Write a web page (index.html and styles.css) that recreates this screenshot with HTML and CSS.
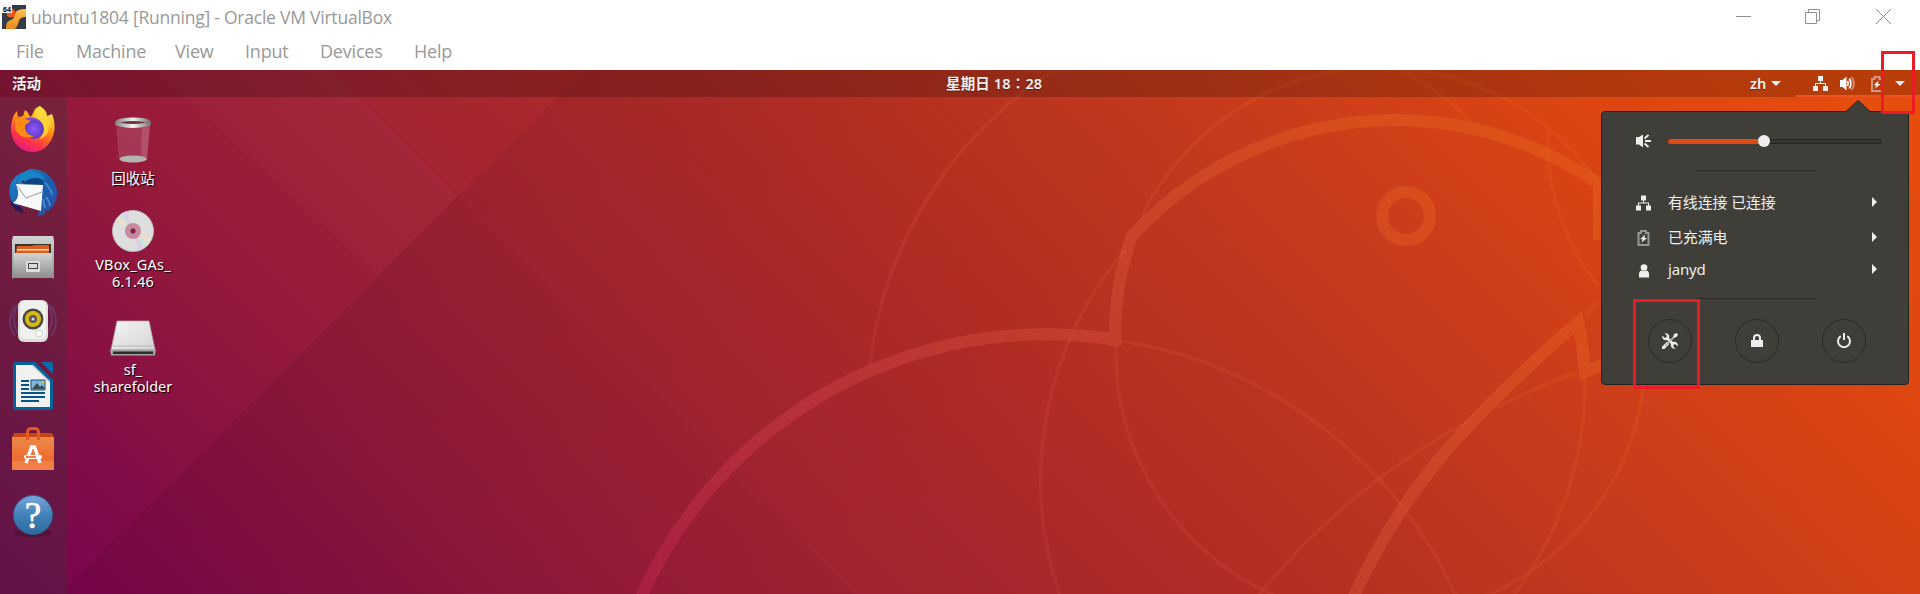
FILE: index.html
```html
<!DOCTYPE html>
<html lang="zh">
<head>
<meta charset="utf-8">
<title>ubuntu1804</title>
<link rel="stylesheet" href="styles.css">
</head>
<body>
<svg width="0" height="0" class="defs">
  <symbol id="net" viewBox="0 0 15 15"><path d="M5 0h5v5H8v2h5v3h2v5h-5v-5h2V8H3v2h2v5H0v-5h2V7h5V5H5z" fill="currentColor"/></symbol>
  <symbol id="bat" viewBox="0 0 12 16"><path d="M3.500 1h5v2H11v12H1V3h2.500z" fill="none" stroke="currentColor" stroke-width="2" opacity=".5"/><path d="M7.500 4.500 2.600 9.200h2.600L4 12.700 9.600 8H7z" fill="currentColor"/></symbol>
  <symbol id="wrench" viewBox="0 0 16 16">
    <path d="M14.500 0 16 1.500 14.700 4 12.500 4.600 3.800 13.500 2.500 12.200 11.400 3.500 12 1.300z" fill="currentColor"/>
    <path d="M0 13.700 5 8.800 7.200 11 2.300 16A1.600 1.600 0 0 1 0 13.700z" fill="currentColor"/>
    <path d="M2.500.3 4.800 2.600 4.500 4.500 2.600 4.800.3 2.500C-.3 6 2 7.800 5 7L9 11c-.8 3 1.500 5.300 4.500 4.700l-2.200-2.300.3-1.800 1.900-.4 2.300 2.300C16.300 10 14 8.300 11 9L7 5C7.800 2 6-.3 2.500.3z" fill="currentColor"/>
    <path d="M11 5 3 13" stroke="#3f3e38" stroke-width=".6"/>
  </symbol>
</svg>

<header class="window">
  <div class="title">
    <svg class="app" viewBox="0 0 24 24"><defs><linearGradient id="vb" x2="0" y2="1"><stop stop-color="#ffc04d"/><stop offset="1" stop-color="#e8881c"/></linearGradient></defs><path fill="#343b47" d="M0 0h24v24H0z"/><path d="M24 4v8c-4 0-6 1-7 4-1 3-2 6-4 8H4c0-5 1-8 5-9 3-1 3-3 4-6 1-4 5-5 11-5z" fill="url(#vb)"/><circle cx="9" cy="8" r="4.500" fill="#ee5a1c"/><path d="M0 0h10v8H0z" fill="#eee"/><text x="1" y="6.500" font-size="7" font-weight="700" font-family="Liberation Sans">64</text></svg>
    <span class="caption">ubuntu1804 [Running] - Oracle VM VirtualBox</span>
    <svg class="controls" viewBox="0 0 160 20" fill="none" stroke="#8f8f8f"><path d="M0 9.500h15M69.500 5.500h11v11h-11zM72.500 5V2.500h11v11H81M140 2l15 15M155 2l-15 15"/></svg>
  </div>
  <nav class="menubar"><span class="m1">File</span><span class="m2">Machine</span><span class="m3">View</span><span class="m4">Input</span><span class="m5">Devices</span><span>Help</span></nav>
</header>

<main class="screen">
  <svg class="wallpaper" viewBox="0 70 1920 524" fill="none">
    <defs>
      <linearGradient id="bg" gradientUnits="userSpaceOnUse" x1="67" y1="667" x2="1292" y2="-558">
        <stop offset="0" stop-color="#750250"/><stop offset=".23" stop-color="#951a3b"/><stop offset=".34" stop-color="#a02234"/><stop offset=".47" stop-color="#ad2a27"/><stop offset=".73" stop-color="#cd3e1a"/><stop offset=".86" stop-color="#df4711"/><stop offset="1" stop-color="#ea4f0c"/>
      </linearGradient>
      <linearGradient id="fade" gradientUnits="userSpaceOnUse" x1="300" y1="354" x2="700" y2="754"><stop stop-color="#000" stop-opacity=".045"/><stop offset="1" stop-color="#000" stop-opacity=".01"/></linearGradient>
      <linearGradient id="line" gradientUnits="userSpaceOnUse" x1="640" y1="594" x2="1250" y2="-16"><stop stop-color="#c0234f" stop-opacity=".5"/><stop offset=".45" stop-color="#dd5249" stop-opacity=".35"/><stop offset="1" stop-color="#ec6a20" stop-opacity=".35"/></linearGradient>
    </defs>
    <path d="M0 70h1920v524H0z" fill="url(#bg)"/>
    <path d="M60 594 584 70H1920V594z" fill="url(#fade)"/>
    <path d="M331 70h253L457 197z" fill="#ff6030" opacity=".02"/>
    <path d="M155 70h176L457 197 378 275z" fill="#fff" opacity=".018"/>
    <path d="M457 197 854 594H60z" fill="#200" opacity=".025"/>
    <g stroke="url(#line)" stroke-width="12">
      <path d="M641.500 596A444 444 0 0 1 1121 340.500M1115.500 346V322Q1117 278 1132 236A357 357 0 0 1 1599 184V240"/>
      <path d="M1353 598C1400 495 1455 430 1578 322Q1583 345 1585 372L1610 361"/>
      <circle cx="1406" cy="216" r="24"/>
    </g>
    <g stroke="url(#line)" stroke-width="3.500" opacity=".55">
      <path d="M870 364A402 402 0 0 1 1055 70M1121 341A444 444 0 0 1 1457 598M1125 250A357 357 0 0 0 1060 596"/>
      <path d="M1116 345A265 265 0 1 0 1645 331 265 265 0 0 0 1142 216"/>
      <path d="M1400 70Q1440 90 1471 121M1548 130V160Q1558 240 1599 286M1599 302 1586 314M1578 373Q1540 385 1497 407M1468 422Q1350 484 1258 596M1585 377Q1587 494 1514 596"/>
    </g>
  </svg>

  <div class="topbar">
    <span class="activities">活动</span>
    <span class="clock">星期日 18∶28</span>
    <div class="tray">
      <span class="zh">zh</span><i class="down"></i>
      <div class="status">
        <svg class="net"><use href="#net"/></svg>
        <svg class="vol" viewBox="0 0 16 15" fill="none" stroke="#fff" stroke-width="1.800"><path d="M0 4h2.500L6.500 .5v14L2.500 11H0z" fill="#fff" stroke="none"/><path d="M7.500 5q1.500 2.500 0 5M9.300 2.500q3.200 5 0 10"/><path d="M11.500 1q5 6.500 0 13" opacity=".4"/></svg>
        <svg class="bat"><use href="#bat"/></svg>
        <i class="down"></i>
      </div>
    </div>
  </div>

  <div class="work">
    <aside class="dock">
      <svg viewBox="0 0 48 48"><defs><linearGradient id="ff" x1=".8" y1="0" x2=".3" y2="1"><stop stop-color="#fff44f"/><stop offset=".4" stop-color="#ff980e"/><stop offset=".75" stop-color="#ff3647"/><stop offset="1" stop-color="#e31587"/></linearGradient><radialGradient id="fp"><stop stop-color="#9059ff"/><stop offset="1" stop-color="#5b3bbd"/></radialGradient></defs><path d="M31 1c6 4 7 7 7 10l5-2c8 19-4 38-19 38S-3 32 4 12c1-3 3-5 4-6l1 6 5-1 2-6c3 2 4 4 5 7 2-1 3-4 4-6 1-3 4-4 6-5z" fill="url(#ff)"/><path d="M31 1c-6 8-7 12-3 17 4 5 7 9 3 16 8-3 10-9 8-14l3 3C42 13 34 9 31 1z" fill="#ffdc3e" opacity=".8"/><circle cx="25" cy="24" r="10" fill="url(#fp)"/><path d="M6 14c7-4 10 1 16 1-2 4-6 3-6 7 0 5 4 9 9 9-8 4-17 0-19-8z" fill="#ff8a16"/><path d="M16 14c7-3 13-1 16 3-4-2-7-2-10-1z" fill="#7a48d8"/></svg>
      <svg viewBox="0 0 48 48"><defs><linearGradient id="tb" x2="1" y2="1"><stop stop-color="#1c8bd0"/><stop offset=".5" stop-color="#1a5fae"/><stop offset="1" stop-color="#2d4fa5"/></linearGradient></defs><path d="M15 3 20 0c14-1 28 9 28 24 0 9-4 14-9 18l-2-1-1 4-8 2 3-5L8 34l3 8C2 35-1 26 1 17 3 10 8 5 15 3z" fill="url(#tb)"/><path d="M1 32c4 2 5 5 10 5l4 7C8 43 3 39 1 32z" fill="#271754"/><path d="M15 3c-6 6-6 11-5 17 9-12 18-14 27-8C31 2 23 2 15 3z" fill="#1786c9"/><path d="M16 12q12-7 21 2l-4 2-20 2z" fill="#104485"/><path d="M7 15 34 16 32 42 4 34q6-4 5-12z" fill="#f8f9fa"/><path d="M8 17 17 29 33 23" stroke="#999" fill="none"/><path d="M35 13c5 4 7 7 8 13M37 28c2 3 4 5 4 9M34 30l2 9" stroke="#57a9e5" stroke-width="2" stroke-opacity=".6" fill="none"/><circle cx="14" cy="13" r="1.400" fill="#503522"/></svg>
      <svg viewBox="0 0 48 48"><defs><linearGradient id="fi" x2="0" y2="1"><stop stop-color="#d4d4d4"/><stop offset="1" stop-color="#8d8d8d"/></linearGradient></defs><path d="M4 2h40l1 4v39l-2-1H5l-2 1V6z" fill="url(#fi)"/><path d="M6 10h36v10H6z" fill="#37332d"/><path d="M8 12h15l2-1h15v8H7z" fill="#e05c1d"/><path d="M8 15h32v1.500H8z" fill="#ffe4b0"/><path d="M5 19h38l1 25H5z" fill="url(#fi)"/><rect x="17" y="27" width="14" height="11" rx="1" fill="#ddd"/><rect x="19.500" y="29.500" width="9" height="5" fill="#ddd" stroke="#444"/></svg>
      <svg viewBox="0 0 48 48"><path d="M6 8Q-4 24 6 38M9 6Q1 22 9 35M42 8Q52 24 42 38M39 6Q47 22 39 35" stroke="#6570a5" stroke-opacity=".35" stroke-width="1.800" fill="none"/><rect x="9" y="2" width="30" height="42" rx="6" fill="#dededa"/><rect x="11" y="3" width="26" height="38" rx="5" fill="#f0f0ee"/><circle cx="24" cy="21" r="10.500" fill="#4a4a43"/><circle cx="24" cy="21" r="8" fill="#d7b817"/><circle cx="24" cy="21" r="4" fill="#59595b"/><circle cx="24" cy="21" r="1.500" fill="#ddd"/><circle cx="30" cy="35.500" r="3.500" fill="#fff" stroke="#ccc"/></svg>
      <svg viewBox="0 0 48 48"><path d="M6 0h20l18 18v27a3 3 0 0 1-3 3H7a3 3 0 0 1-3-3V3a3 3 0 0 1 2-3z" fill="#05639c"/><path d="M32 0h10q2 0 2 2v10z" fill="#0b6aa8"/><path d="M7 3h17l17 17v25H7z" fill="#f1f1f1"/><path d="m24 3 17 16-2 0L22 3z" fill="#ccc"/><path d="M12 19h8M12 23h8M12 27h8M12 31h24M12 35h24M12 39h18" stroke="#05548a" stroke-width="2"/><path d="M22 18h14v10H22z" fill="#7db8df" stroke="#174f77"/><path d="m23 27 5-6 3 4 2-2 3 4z" fill="#384c4c"/><circle cx="34" cy="20" r="1.600" fill="#e5bd35"/></svg>
      <svg viewBox="0 0 48 48"><defs><linearGradient id="sw" x2="0" y2="1"><stop stop-color="#eb8a4c"/><stop offset=".7" stop-color="#f06a2e"/><stop offset=".75" stop-color="#f27f48"/></linearGradient></defs><path d="M5 7h38l2 5H3z" fill="#c9440f"/><path d="M3 11h42v33H3z" fill="url(#sw)"/><path d="M18.500 14V6.500q0-4 4-4h3q4 0 4 4V14" fill="none" stroke="#e5571f" stroke-width="3"/><path d="M17 37 22.500 21h3L31 37" stroke="#fff" stroke-width="3.400" fill="none"/><rect x="15" y="29" width="18" height="4" rx="2" fill="#fff"/><path d="M17 31h10" stroke="#ee5414" stroke-width="1.500"/></svg>
      <svg viewBox="0 0 48 48"><defs><linearGradient id="he" x2="0" y2="1"><stop stop-color="#7aa5e0"/><stop offset=".5" stop-color="#4181b7"/><stop offset="1" stop-color="#2b6b9b"/></linearGradient></defs><ellipse cx="24" cy="42" rx="19" ry="4" opacity=".2"/><circle cx="24" cy="24" r="19.500" fill="url(#he)" stroke="#2e6594"/><text x="24" y="36.500" text-anchor="middle" font-size="37" font-family="Liberation Serif" stroke="#fff" stroke-width=".7" fill="#fff">?</text></svg>
    </aside>
    <div class="desktop">
      <figure class="f1"><svg width="40" height="48" viewBox="0 0 40 48"><defs><linearGradient id="rim"><stop stop-color="#888"/><stop offset=".5" stop-color="#f5f5ee"/><stop offset="1" stop-color="#777"/></linearGradient></defs><path d="M3 8 6 44q14 5 28 0l3-36z" fill="#c27086" opacity=".35"/><path d="M29 10 28 43l6 1 3-35z" fill="#efb0c0" opacity=".2"/><ellipse cx="20" cy="43" rx="13.500" ry="3.500" fill="#b5b5b0"/><ellipse cx="20" cy="6.500" rx="16" ry="3.200" fill="#6a3445" stroke="url(#rim)" stroke-width="3.600"/><path d="M2 7v2q18 6 36 0V7q-18 6-36 0z" fill="url(#rim)"/></svg><figcaption>回收站</figcaption></figure>
      <figure class="f2"><svg width="42" height="42" viewBox="0 0 42 42"><circle cx="21" cy="21" r="20.500" fill="#dedede" stroke="#b9b9b9"/><path d="m21 21-17-11q4-6 11-8z" fill="#e8d8e0"/><path d="m21 21-17-11 3-4z" fill="#f3dfc8"/><path d="m21 21-14-15 3-3z" fill="#c9e7df"/><path d="m21 21-11-18 5-2z" fill="#dccfe8"/><path d="m21 21 18 8-3 5z" fill="#f1dcc8"/><path d="m21 21 15 13-4 4z" fill="#cbe6df"/><path d="m21 21 11 17-5 3z" fill="#dacfe6"/><circle cx="21" cy="21" r="8" fill="#c88aa0"/><circle cx="21" cy="21" r="3.200" fill="#911940" stroke="#aaa" stroke-width="1"/></svg><figcaption>VBox_GAs_<br>6.1.46</figcaption></figure>
      <figure class="f3"><svg width="46" height="36" viewBox="0 0 46 36"><defs><linearGradient id="dr" x2="1" y2="1"><stop stop-color="#f4f4f4"/><stop offset="1" stop-color="#d4d4d4"/></linearGradient></defs><path d="M7 1h32l6 29H1z" fill="url(#dr)" stroke="#aaa" stroke-width=".8"/><path d="M3 26h40" stroke="#b5b5b5"/><path d="M0 29.500h46l-1 6H1z" fill="#a3a3a0"/><path d="M3 31.500h40v2.500H3z" fill="#2c2c2a"/></svg><figcaption>sf_<br>sharefolder</figcaption></figure>
    </div>
  </div>

  <section class="panel">
    <svg class="tip" viewBox="0 0 26 13"><path d="M0 13 1 11.500 13 .5 25 11.500 26 13z" fill="#3f3e38"/><path d="M0 11.500h1L13 .5l12 11h1" fill="none" stroke="#22211e"/></svg>
    <div class="row slider">
      <svg viewBox="0 0 15 15"><path d="M0 3.500h3L7 1v13l-4-3H0z" fill="#eee"/><path d="M8.500 5 12.500 1.500M9 7.500h6M8.500 10l4 3.500" stroke="#eee" stroke-width="1.900"/></svg>
      <div class="track"><div class="level"></div><div class="knob"></div></div>
    </div>
    <hr>
    <div class="row r1"><svg><use href="#net"/></svg><span>有线连接 已连接</span><i class="right"></i></div>
    <div class="row r2"><svg><use href="#bat"/></svg><span>已充满电</span><i class="right"></i></div>
    <div class="row r3"><svg viewBox="0 0 15 15" fill="#eee"><circle cx="8" cy="4" r="3.300"/><path d="M3 14v-3.500Q3 7 6 7q2 1.300 4 0 3 0 3 3.500V14z"/></svg><span class="user">janyd</span><i class="right"></i></div>
    <hr>
    <div class="buttons">
      <b><svg><use href="#wrench"/></svg></b>
      <b><svg viewBox="0 0 16 16"><path d="M2 7h12v7H2z" fill="#eee"/><path d="M5 8V5a3 3 0 0 1 6 0v3" stroke="#eee" stroke-width="2" fill="none"/></svg></b>
      <b><svg viewBox="0 0 16 16" fill="none" stroke="#eee" stroke-width="2"><path d="M4.700 3.200a6 6 0 1 0 6.600 0M8 0v7"/></svg></b>
    </div>
    <div class="mark mark-settings"></div>
  </section>
</main>
<div class="mark mark-arrow"></div>
</body>
</html>
```

FILE: styles.css
```css
* { box-sizing: border-box; }
body { margin: 0; width: 1920px; height: 594px; overflow: hidden; position: relative; background: #fff; font-family: "Noto Sans", "Noto Sans CJK SC", sans-serif; }
svg { display: block; flex: none; }
i { display: block; flex: none; }
.defs { position: absolute; }

.window { height: 70px; color: #999; font: 18px/24px "Open Sans", sans-serif; }
.title { display: flex; align-items: center; height: 36px; padding-left: 2px; }
.app { width: 24px; height: 24px; margin-top: -2px; }
.caption { margin: -2px 0 0 5px; font-size: 17.500px; letter-spacing: -.23px; white-space: nowrap; }
.controls { width: 160px; height: 20px; margin: -2px 24px 0 auto; }
.menubar { display: flex; padding: 3px 0 0 16px; letter-spacing: -.2px; }
.m1 { width: 60px; }
.m2 { width: 99px; }
.m3 { width: 70px; }
.m4 { width: 75px; }
.m5 { width: 94px; }

.screen { position: relative; height: 524px; overflow: hidden; }
.wallpaper { position: absolute; inset: 0; width: 1920px; height: 524px; }
.topbar { position: relative; display: flex; align-items: center; height: 27px; padding-left: 12px; background: rgba(0, 0, 0, .2); color: #f2f2f2; font-size: 14.500px; font-weight: 600; line-height: 29px; text-shadow: 0 1px 1px rgba(0, 0, 0, .4); }
.activities { width: 934px; }
.clock { white-space: nowrap; letter-spacing: .15px; }
.tray { display: flex; align-items: center; margin-left: auto; height: 27px; }
.zh { width: 21px; }
.down { border: 5px solid transparent; border-top-color: #f2f2f2; border-bottom: 0; }
.status { display: flex; align-items: center; width: 124px; height: 27px; margin-left: 15px; padding: 2px 0 0 17px; border-bottom: 2px solid #ea5420; }
.status .net { width: 15px; height: 15px; }
.vol { width: 16px; height: 15px; margin-left: 12px; }
.status .bat { width: 12px; height: 16px; margin-left: 15px; }
.status .down { margin-left: 12px; }

.work { position: relative; display: flex; height: 497px; }
.dock { display: flex; flex-direction: column; align-items: center; gap: 16.300px; width: 67px; padding: 8px 1px 0 0; background: rgba(66, 48, 60, .35); }
.dock svg { width: 48px; height: 48px; }
.desktop { width: 132px; color: #fff; font-size: 14.500px; line-height: 17px; text-align: center; text-shadow: 1px 1px 1px #000; }
figure { display: flex; flex-direction: column; align-items: center; margin: 0; }
.f1 { height: 110px; padding-top: 19px; }
.f1 figcaption { margin-top: 6px; }
.f2 { height: 113px; padding-top: 3px; }
.f2 figcaption { margin-top: 4px; letter-spacing: .2px; }
.f3 figcaption { margin-top: 5px; }

.panel { position: absolute; left: 1601px; top: 41px; width: 308px; height: 274px; border: 1px solid #22211e; border-radius: 4px; background: #3f3e38; color: #eee; }
.tip { position: absolute; left: 243px; top: -12px; width: 26px; height: 13px; }
.row { display: flex; align-items: center; height: 32px; padding: 0 31px 0 34px; font-size: 15px; }
.row > svg { width: 15px; height: 16px; margin-right: 17px; }
.row span { white-space: nowrap; letter-spacing: -.15px; margin-top: -3px; }
.slider { height: 58px; padding-right: 26px; }
.track { position: relative; flex: 1; height: 5px; border: 1px solid #25241f; border-radius: 3px; background: #353430; }
.level { width: 45%; height: 5px; margin: -1px; border-radius: 3px; background: #dd4814; }
.knob { position: absolute; left: 89px; top: -5px; width: 12px; height: 12px; border-radius: 50%; background: #eee; }
hr { width: 122px; height: 1px; margin: 0 auto; border: 0; background: #2b2a27; transform: translateX(2px); }
.r1 { margin-top: 14px; height: 36px; }
.r2 { height: 34px; }
.r3 { height: 31px; margin-bottom: 12px; }
.right { margin: -3px 0 0 auto; border: 5px solid transparent; border-left-color: #eee; border-right: 0; }
.buttons { display: flex; gap: 43px; padding: 20px 0 0 46px; }
.buttons b { display: flex; align-items: center; justify-content: center; width: 44px; height: 44px; border: 1px solid #2b2a27; border-radius: 50%; }
.buttons svg { width: 16px; height: 16px; }
.mark { position: absolute; border: 3px solid #ed1c24; }
.mark-settings { left: 31px; top: 187px; width: 67px; height: 90px; }
.mark-arrow { left: 1881px; top: 51px; width: 34px; height: 63px; }
```
